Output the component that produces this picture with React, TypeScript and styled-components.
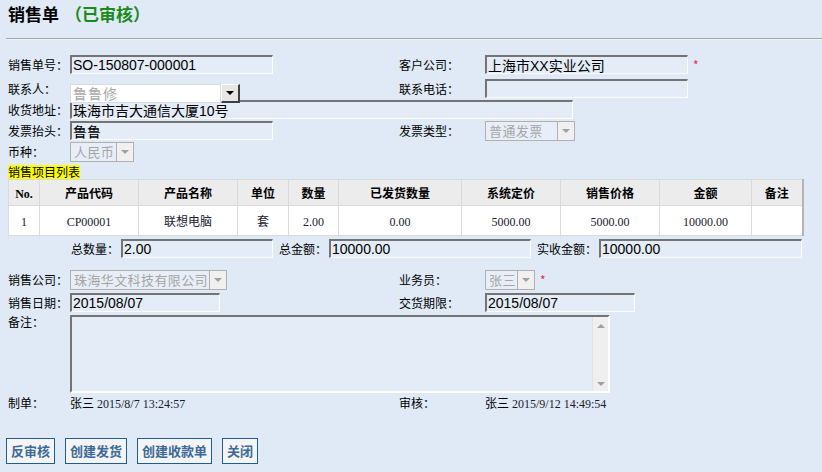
import React from "react";
import styled, { createGlobalStyle } from "styled-components";

const GlobalStyle = createGlobalStyle`
  html, body {
    margin: 0;
    padding: 0;
    background: #dfeaf6;
  }
  body {
    font-family: "Noto Sans CJK SC", "Liberation Sans", sans-serif;
    font-size: 12px;
    color: #000;
  }
`;

const Page = styled.div`
  width: 822px;
  height: 472px;
  padding-left: 8px;
  box-sizing: border-box;
  overflow: hidden;
`;

const TitleBar = styled.div`
  height: 38px;
  padding-top: 3px;
  box-sizing: border-box;
  font-size: 17px;
  font-weight: bold;
  line-height: 22px;
  white-space: nowrap;
`;

const Status = styled.span`
  color: #1a8a1a;
  margin-left: 6px;
`;

const Divider = styled.div`
  margin-left: -2px;
  height: 1px;
  background: #a4a4a4;
  border-bottom: 1px solid #eef3fa;
`;

const Form = styled.div`
  margin-top: 15px;
  display: flex;
  flex-direction: column;
`;

const Row = styled.div<{ $h: number; $mt?: number }>`
  display: flex;
  height: ${(p) => p.$h}px;
  margin-top: ${(p) => p.$mt ?? 0}px;
  flex: none;
`;

const Half = styled.div<{ $w?: number }>`
  display: flex;
  align-items: flex-start;
  width: ${(p) => (p.$w ? `${p.$w}px` : "auto")};
  flex: none;
`;

const Label = styled.span<{ $w: number; $right?: boolean }>`
  width: ${(p) => p.$w}px;
  flex: none;
  font-size: 12px;
  line-height: 19px;
  height: 19px;
  white-space: nowrap;
  text-align: ${(p) => (p.$right ? "right" : "left")};
  padding-right: ${(p) => (p.$right ? 2 : 0)}px;
  box-sizing: border-box;
`;

const TextBox = styled.input<{ $w: number }>`
  width: ${(p) => p.$w}px;
  height: 19px;
  box-sizing: border-box;
  margin: 0;
  padding: 0 1px;
  border-style: solid;
  border-width: 2px 1px 1px 2px;
  border-color: #747474 #fbfdff #fbfdff #747474;
  background: #e4ecf7;
  font-family: "Liberation Sans", "Noto Sans CJK SC", sans-serif;
  font-size: 14px;
  color: #000;
  outline: none;
`;

const Required = styled.span`
  color: #e8284a;
  font-size: 12px;
  line-height: 14px;
  margin-left: 5px;
  margin-top: 3px;
`;

const Combo = styled.div`
  display: flex;
  margin-top: 5px;
  height: 19px;
  position: relative;
  z-index: 1;
`;

const ComboInput = styled.div`
  width: 151px;
  height: 19px;
  box-sizing: border-box;
  background: #fff;
  border: 1px solid #d6dce4;
  color: #a8a8a8;
  font-size: 14px;
  line-height: 17px;
  padding-left: 2px;
  letter-spacing: 1px;
`;

const ComboButton = styled.div`
  width: 19px;
  height: 19px;
  box-sizing: border-box;
  background: #e6e6e6;
  border-style: solid;
  border-width: 1px 2px 2px 1px;
  border-color: #fff #404040 #404040 #fff;
  display: flex;
  align-items: center;
  justify-content: center;
`;

const BlackArrow = styled.span`
  width: 0;
  height: 0;
  border-left: 4px solid transparent;
  border-right: 4px solid transparent;
  border-top: 4px solid #000;
`;

const SelectBox = styled.div<{ $w: number }>`
  width: ${(p) => p.$w}px;
  height: 20px;
  box-sizing: border-box;
  border: 1px solid #b0b0b0;
  background: #e8eef7;
  display: flex;
`;

const SelectText = styled.span`
  flex: 1;
  min-width: 0;
  color: #a6a6a6;
  font-size: 13px;
  line-height: 18px;
  padding-left: 3px;
  letter-spacing: 0.4px;
  white-space: nowrap;
`;

const SelectArrow = styled.span`
  width: 16px;
  flex: none;
  border-left: 1px solid #b0b0b0;
  background: #f0f0f0;
  display: flex;
  align-items: center;
  justify-content: center;
`;

const GrayArrow = styled.span<{ $up?: boolean }>`
  width: 0;
  height: 0;
  border-left: 4px solid transparent;
  border-right: 4px solid transparent;
  ${(p) =>
    p.$up ? "border-bottom: 4px solid #a0a0a0;" : "border-top: 4px solid #a0a0a0;"}
`;

const Caption = styled.div`
  height: 16px;
  span {
    background: #ffff00;
    font-size: 12px;
    line-height: 14px;
    display: inline-block;
  }
`;

const Grid = styled.table`
  border-collapse: collapse;
  table-layout: fixed;
  width: 794px;
  background: #fff;
  border: 1px solid #d4d4d4;
  border-right: 2px solid #b4b4b4;
  box-sizing: border-box;

  th,
  td {
    border: 1px solid #dadada;
    padding: 0;
    text-align: center;
    white-space: nowrap;
    overflow: hidden;
  }
  th {
    height: 25px;
    background: #ececec;
    font-size: 12px;
    font-weight: bold;
  }
  td {
    height: 29px;
    font-size: 12px;
    color: #202030;
  }
`;

const Num = styled.span`
  font-family: "Liberation Serif", serif;
  font-size: 12px;
`;

const TotalsRow = styled.div`
  display: flex;
  margin-top: 3px;
  height: 19px;
`;

const Memo = styled.div`
  width: 540px;
  height: 78px;
  box-sizing: border-box;
  border-style: solid;
  border-width: 2px;
  border-color: #747474 #fbfdff #fbfdff #747474;
  background: #e4ecf7;
  display: flex;
  justify-content: flex-end;
`;

const ScrollTrack = styled.div`
  width: 16px;
  background: #efefef;
  border-left: 1px solid #e2e2e2;
  display: flex;
  flex-direction: column;
  justify-content: space-between;
  align-items: center;
  padding: 7px 0 5px;
  box-sizing: border-box;
`;

const Info = styled.span<{ $w?: number }>`
  width: ${(p) => (p.$w ? `${p.$w}px` : "auto")};
  flex: none;
  font-size: 12px;
  line-height: 14px;
  white-space: nowrap;
`;

const Stamp = styled.span`
  font-family: "Liberation Serif", serif;
  font-size: 12px;
  color: #1a1a2e;
  margin-left: 3px;
`;

const Actions = styled.div`
  display: flex;
  gap: 10px;
  margin-top: 28px;
  margin-left: -2px;
`;

const Button = styled.button`
  height: 26px;
  margin: 0;
  padding: 0 4px;
  box-sizing: border-box;
  border: 1px solid #1d5d8f;
  background: #f4f4f4;
  color: #3c6a98;
  font-family: "Noto Sans CJK SC", sans-serif;
  font-weight: bold;
  font-size: 13px;
  line-height: 24px;
  cursor: pointer;
`;

const Select = ({ w, text }: { w: number; text: string }) => (
  <SelectBox $w={w}>
    <SelectText>{text}</SelectText>
    <SelectArrow>
      <GrayArrow />
    </SelectArrow>
  </SelectBox>
);

const columns = [
  { title: "No.", w: 31, serif: true },
  { title: "产品代码", w: 99 },
  { title: "产品名称", w: 99 },
  { title: "单位", w: 51 },
  { title: "数量", w: 50 },
  { title: "已发货数量", w: 123 },
  { title: "系统定价", w: 99 },
  { title: "销售价格", w: 99 },
  { title: "金额", w: 92 },
  { title: "备注", w: 51 },
];

const App = () => {
  return (
    <Page>
      <GlobalStyle />
      <TitleBar>
        销售单<Status>（已审核）</Status>
      </TitleBar>
      <Divider />

      <Form>
        <Row $h={24}>
          <Half $w={391}>
            <Label $w={62}>销售单号：</Label>
            <TextBox $w={203} readOnly value="SO-150807-000001" />
          </Half>
          <Half>
            <Label $w={86}>客户公司：</Label>
            <TextBox $w={203} readOnly value="上海市XX实业公司" />
            <Required>*</Required>
          </Half>
        </Row>

        <Row $h={21}>
          <Half $w={391}>
            <Label $w={62}>联系人：</Label>
            <Combo>
              <ComboInput>鲁鲁修</ComboInput>
              <ComboButton>
                <BlackArrow />
              </ComboButton>
            </Combo>
          </Half>
          <Half>
            <Label $w={86}>联系电话：</Label>
            <TextBox $w={203} readOnly value="" />
          </Half>
        </Row>

        <Row $h={21}>
          <Half>
            <Label $w={62}>收货地址：</Label>
            <TextBox $w={503} readOnly value="珠海市吉大通信大厦10号" />
          </Half>
        </Row>

        <Row $h={21}>
          <Half $w={391}>
            <Label $w={62}>发票抬头：</Label>
            <TextBox $w={203} readOnly value="鲁鲁" />
          </Half>
          <Half>
            <Label $w={86}>发票类型：</Label>
            <Select w={90} text="普通发票" />
          </Half>
        </Row>

        <Row $h={21}>
          <Half>
            <Label $w={62}>币种：</Label>
            <Select w={64} text="人民币" />
          </Half>
        </Row>

        <Caption>
          <span>销售项目列表</span>
        </Caption>

        <Grid>
          <colgroup>
            {columns.map((c) => (
              <col key={c.title} style={{ width: c.w }} />
            ))}
          </colgroup>
          <thead>
            <tr>
              {columns.map((c) => (
                <th key={c.title}>{c.serif ? <Num>{c.title}</Num> : c.title}</th>
              ))}
            </tr>
          </thead>
          <tbody>
            <tr>
              <td><Num>1</Num></td>
              <td><Num>CP00001</Num></td>
              <td>联想电脑</td>
              <td>套</td>
              <td><Num>2.00</Num></td>
              <td><Num>0.00</Num></td>
              <td><Num>5000.00</Num></td>
              <td><Num>5000.00</Num></td>
              <td><Num>10000.00</Num></td>
              <td></td>
            </tr>
          </tbody>
        </Grid>

        <TotalsRow>
          <Label $w={113} $right>总数量：</Label>
          <TextBox $w={152} readOnly value="2.00" />
          <Label $w={56} $right>总金额：</Label>
          <TextBox $w={202} readOnly value="10000.00" />
          <Label $w={68} $right>实收金额：</Label>
          <TextBox $w={203} readOnly value="10000.00" />
        </TotalsRow>

        <Row $h={23} $mt={12}>
          <Half $w={391}>
            <Label $w={62}>销售公司：</Label>
            <Select w={157} text="珠海华文科技有限公司" />
          </Half>
          <Half>
            <Label $w={86}>业务员：</Label>
            <Select w={50} text="张三" />
            <Required>*</Required>
          </Half>
        </Row>

        <Row $h={22}>
          <Half $w={391}>
            <Label $w={62}>销售日期：</Label>
            <TextBox $w={150} readOnly value="2015/08/07" />
          </Half>
          <Half>
            <Label $w={86}>交货期限：</Label>
            <TextBox $w={150} readOnly value="2015/08/07" />
          </Half>
        </Row>

        <Row $h={81}>
          <Half>
            <Label $w={62} style={{ lineHeight: "14px" }}>备注：</Label>
            <Memo>
              <ScrollTrack>
                <GrayArrow $up />
                <GrayArrow />
              </ScrollTrack>
            </Memo>
          </Half>
        </Row>

        <Row $h={14}>
          <Half $w={391}>
            <Info $w={62}>制单：</Info>
            <Info>
              张三<Stamp>2015/8/7 13:24:57</Stamp>
            </Info>
          </Half>
          <Half>
            <Info $w={86}>审核：</Info>
            <Info>
              张三<Stamp>2015/9/12 14:49:54</Stamp>
            </Info>
          </Half>
        </Row>

        <Actions>
          <Button>反审核</Button>
          <Button>创建发货</Button>
          <Button>创建收款单</Button>
          <Button>关闭</Button>
        </Actions>
      </Form>
    </Page>
  );
};

export default App;
